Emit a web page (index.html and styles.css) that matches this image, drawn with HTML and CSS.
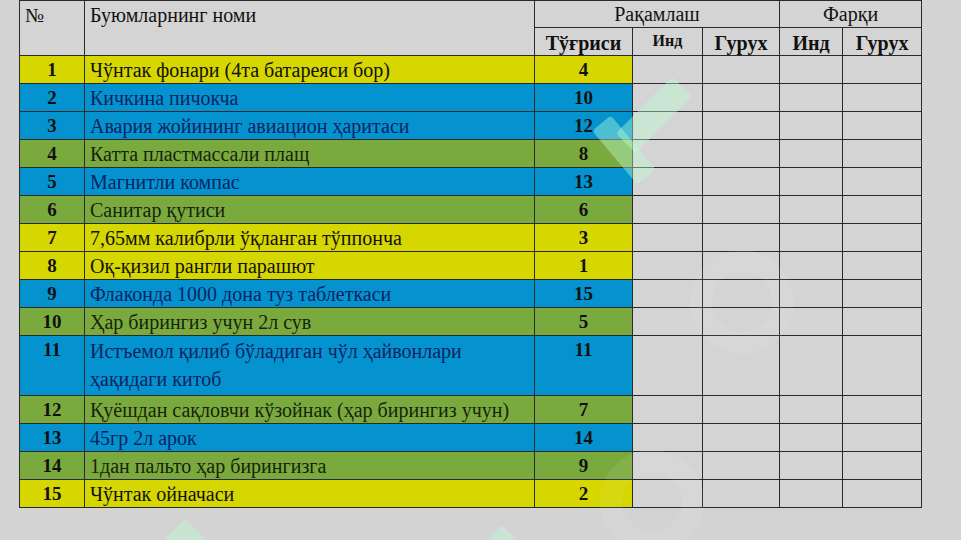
FILE: index.html
```html
<!DOCTYPE html>
<html lang="uz">
<head>
<meta charset="utf-8">
<title>Буюмлар</title>
<link rel="stylesheet" href="styles.css">
</head>
<body>
<div class="page">
  <table class="grid">
    <colgroup>
      <col class="c-num"><col class="c-name"><col class="c-ok"><col class="c-ind"><col class="c-grp"><col class="c-ind2"><col class="c-grp2">
    </colgroup>
    <thead>
      <tr class="h1">
        <th rowspan="2" class="top-left">№</th>
        <th rowspan="2" class="top-left name-h">Буюмларнинг номи</th>
        <th colspan="3" class="plain">Рақамлаш</th>
        <th colspan="2" class="plain">Фарқи</th>
      </tr>
      <tr class="h2">
        <th>Тўғриси</th>
        <th class="small">Инд</th>
        <th>Гурух</th>
        <th>Инд</th>
        <th>Гурух</th>
      </tr>
    </thead>
    <tbody>
      <tr class="yellow"><td class="n">1</td><td class="t">Чўнтак фонари (4та батареяси бор)</td><td class="n">4</td><td></td><td></td><td></td><td></td></tr>
      <tr class="blue"><td class="n">2</td><td class="t">Кичкина пичокча</td><td class="n">10</td><td></td><td></td><td></td><td></td></tr>
      <tr class="blue"><td class="n">3</td><td class="t">Авария жойининг авиацион ҳаритаси</td><td class="n">12</td><td></td><td></td><td></td><td></td></tr>
      <tr class="green"><td class="n">4</td><td class="t">Катта пластмассали плащ</td><td class="n">8</td><td></td><td></td><td></td><td></td></tr>
      <tr class="blue"><td class="n">5</td><td class="t">Магнитли компас</td><td class="n">13</td><td></td><td></td><td></td><td></td></tr>
      <tr class="green"><td class="n">6</td><td class="t">Санитар қутиси</td><td class="n">6</td><td></td><td></td><td></td><td></td></tr>
      <tr class="yellow"><td class="n">7</td><td class="t">7,65мм калибрли ўқланган тўппонча</td><td class="n">3</td><td></td><td></td><td></td><td></td></tr>
      <tr class="yellow"><td class="n">8</td><td class="t">Оқ-қизил рангли парашют</td><td class="n">1</td><td></td><td></td><td></td><td></td></tr>
      <tr class="blue"><td class="n">9</td><td class="t">Флаконда 1000 дона туз таблеткаси</td><td class="n">15</td><td></td><td></td><td></td><td></td></tr>
      <tr class="green"><td class="n">10</td><td class="t">Ҳар бирингиз учун 2л сув</td><td class="n">5</td><td></td><td></td><td></td><td></td></tr>
      <tr class="blue tall"><td class="n">11</td><td class="t">Истъемол қилиб бўладиган чўл ҳайвонлари ҳақидаги китоб</td><td class="n">11</td><td></td><td></td><td></td><td></td></tr>
      <tr class="green"><td class="n">12</td><td class="t">Қуёшдан сақловчи кўзойнак (ҳар бирингиз учун)</td><td class="n">7</td><td></td><td></td><td></td><td></td></tr>
      <tr class="blue"><td class="n">13</td><td class="t">45гр 2л арок</td><td class="n">14</td><td></td><td></td><td></td><td></td></tr>
      <tr class="green"><td class="n">14</td><td class="t">1дан пальто ҳар бирингизга</td><td class="n">9</td><td></td><td></td><td></td><td></td></tr>
      <tr class="yellow"><td class="n">15</td><td class="t">Чўнтак ойначаси</td><td class="n">2</td><td></td><td></td><td></td><td></td></tr>
    </tbody>
  </table>
  <div class="mint mint-1"></div>
  <div class="mint mint-2"></div>
  <div class="mint mint-3"></div>
  <div class="mint mint-4"></div>
  <div class="ghost ghost-1"></div>
  <div class="ghost ghost-2"></div>
</div>
</body>
</html>
```
FILE: styles.css
```css
html, body {
  margin: 0;
  padding: 0;
  background: #d3d3d3;
}
.page {
  position: relative;
  width: 961px;
  height: 540px;
  overflow: hidden;
  background: #d3d3d3;
  font-family: "Liberation Serif", "Times New Roman", serif;
  color: #111;
}
.grid {
  margin-left: 19px;
  border-collapse: collapse;
  table-layout: fixed;
  width: 902px;
  font-size: 20px;
}
.c-num { width: 65px; }
.c-name { width: 450px; }
.c-ok { width: 98px; }
.c-ind { width: 70px; }
.c-grp { width: 77px; }
.c-ind2 { width: 63px; }
.c-grp2 { width: 79px; }
.grid th, .grid td {
  border: 1px solid #2a2a2a;
  padding: 0;
  background: #d4d4d4;
  line-height: 22px;
}
.grid th {
  font-weight: bold;
  height: 25px;
  vertical-align: middle;
}
.grid th.top-left {
  text-align: left;
  vertical-align: top;
  font-weight: normal;
  padding: 3px 0 0 5px;
}
.grid th.plain {
  font-weight: normal;
  height: 26px;
}
.grid th.small {
  font-size: 16px;
  vertical-align: top;
  padding-top: 1px;
}
.grid .h2 th {
  padding-top: 2px;
}
.grid td {
  height: 27px;
}
.grid td.n {
  text-align: center;
  font-weight: bold;
  font-size: 19px;
}
.grid td.t {
  padding-left: 5px;
}
.tall td {
  height: 56px;
}
.tall td.n {
  vertical-align: top;
  padding-top: 3px;
}
.tall td.t {
  line-height: 28px;
  vertical-align: top;
  padding-top: 1px;
}
.yellow td:nth-child(-n+3) { background: #d6d600; }
.blue td:nth-child(-n+3) { background: #0493cf; }
.green td:nth-child(-n+3) { background: #7aaa3e; }
.blue td.t { color: #0b2462; }
.green td.t { color: #16240c; }
.mint {
  position: absolute;
  background: rgba(190, 255, 215, 0.4);
  transform: rotate(45deg);
  border-radius: 4px;
  pointer-events: none;
}
.mint-1 { left: 640px; top: 75px; width: 28px; height: 80px; }
.mint-2 { left: 612px; top: 115px; width: 24px; height: 70px; transform: rotate(-40deg); }
.mint-3 { left: 170px; top: 525px; width: 30px; height: 30px; }
.mint-4 { left: 490px; top: 530px; width: 24px; height: 24px; }
.ghost {
  position: absolute;
  border: 22px solid rgba(255, 255, 255, 0.07);
  border-radius: 50%;
  pointer-events: none;
}
.ghost-1 { left: 690px; top: 250px; width: 60px; height: 60px; }
.ghost-2 { left: 600px; top: 450px; width: 60px; height: 60px; }
```
